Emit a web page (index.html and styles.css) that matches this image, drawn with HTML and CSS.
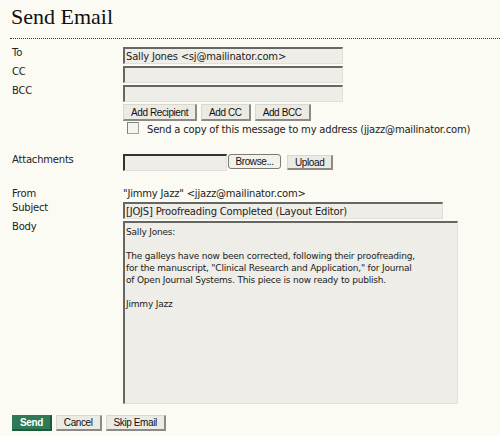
FILE: index.html
```html
<!DOCTYPE html>
<html>
<head>
<meta charset="utf-8">
<link rel="stylesheet" href="styles.css">
</head>
<body>
<div class="page">
  <h1 class="title">Send Email</h1>
  <div class="rule"></div>
  <form class="form">
    <div class="row">
      <div class="label">To</div>
      <div class="field"><input class="text w220" type="text" value="Sally Jones <sj@mailinator.com>"></div>
    </div>
    <div class="row">
      <div class="label">CC</div>
      <div class="field"><input class="text w220" type="text" value=""></div>
    </div>
    <div class="row">
      <div class="label">BCC</div>
      <div class="field"><input class="text w220" type="text" value=""></div>
    </div>
    <div class="row">
      <div class="label"></div>
      <div class="field buttons">
        <button type="button" class="btn">Add Recipient</button>
        <button type="button" class="btn">Add CC</button>
        <button type="button" class="btn">Add BCC</button>
      </div>
    </div>
    <div class="row check-row">
      <div class="label"></div>
      <div class="field check">
        <span class="box"></span>
        <span class="check-text">Send a copy of this message to my address (jjazz@mailinator.com)</span>
      </div>
    </div>
    <div class="row attach">
      <div class="label">Attachments</div>
      <div class="field buttons">
        <span class="file"></span>
        <button type="button" class="btn browse">Browse...</button>
        <button type="button" class="btn upload">Upload</button>
      </div>
    </div>
    <div class="row from">
      <div class="label">From</div>
      <div class="field plain">"Jimmy Jazz" &lt;jjazz@mailinator.com&gt;</div>
    </div>
    <div class="row">
      <div class="label">Subject</div>
      <div class="field"><input class="text w320" type="text" value="[JOJS] Proofreading Completed (Layout Editor)"></div>
    </div>
    <div class="row">
      <div class="label">Body</div>
      <div class="field top"><div class="area">Sally Jones:<br><br>The galleys have now been corrected, following their proofreading,<br>for the manuscript, "Clinical Research and Application," for Journal<br>of Open Journal Systems. This piece is now ready to publish.<br><br>Jimmy Jazz</div></div>
    </div>
    <div class="actions">
      <button type="button" class="btn send">Send</button>
      <button type="button" class="btn">Cancel</button>
      <button type="button" class="btn">Skip Email</button>
    </div>
  </form>
</div>
</body>
</html>
```
FILE: styles.css
```css
html, body {
  margin: 0;
  padding: 0;
  background: #fbfbf3;
}
body {
  font-family: "DejaVu Sans", Verdana, sans-serif;
  font-size: 10px;
  letter-spacing: -0.2px;
  color: #222;
}
.page {
  padding: 0 0 0 10px;
}
.title {
  margin: 6px 0 0 1px;
  font-family: "Liberation Serif", Georgia, serif;
  font-weight: normal;
  font-size: 22px;
  line-height: 22px;
  letter-spacing: 0;
  color: #111;
}
.rule {
  margin-top: 10px;
  border-top: 1px dotted #333;
}
.form {
  margin: 8px 0 0 2px;
}
.row {
  display: grid;
  grid-template-columns: 111px 1fr;
  margin-bottom: 2px;
}
.label {
  padding-top: 0;
  line-height: 12px;
}
.field {
  display: flex;
  align-items: center;
}
.field.top {
  align-items: flex-start;
}
.text {
  box-sizing: border-box;
  height: 17px;
  margin: 0;
  padding: 1px 1px 0;
  font-family: "DejaVu Sans", Verdana, sans-serif;
  font-size: 10px;
  letter-spacing: -0.2px;
  color: #222;
  background: #eeede7;
  border: 1px solid #e0dfd8;
  border-top: 2px solid #666664;
  border-left: 2px solid #666664;
  outline: none;
}
.w220 { width: 220px; }
.w320 { width: 320px; }
.buttons {
  gap: 4px;
}
.btn {
  box-sizing: border-box;
  height: 17px;
  margin: 0;
  padding: 0 7px;
  font-family: "Liberation Sans", Arial, sans-serif;
  font-size: 10px;
  letter-spacing: -0.4px;
  color: #111;
  background: #ecebe3;
  border: 1px solid #d8d7d0;
  border-right: 2px solid #8a8a86;
  border-bottom: 2px solid #8a8a86;
  border-radius: 0;
  line-height: 13px;
}
.check-row {
  margin-top: -1px;
}
.check {
  align-items: flex-start;
  height: 14px;
}
.box {
  display: inline-block;
  box-sizing: border-box;
  width: 12px;
  height: 12px;
  margin-left: 4px;
  background: #f3f3ef;
  border: 1px solid #a4a4a0;
  border-top-color: #808080;
  border-left-color: #808080;
}
.check-text {
  margin-left: 8px;
  padding-top: 2px;
  line-height: 12px;
}
.attach {
  margin-top: 18px;
}
.file {
  display: inline-block;
  box-sizing: border-box;
  width: 104px;
  height: 17px;
  background: #eeede7;
  border: 1px solid #e0dfd8;
  border-top: 2px solid #333;
  border-left: 2px solid #333;
  margin-right: -3px;
}
.browse {
  height: 15px;
  border: 1px solid #7a7a76;
  border-radius: 3px;
  background: #f2f1ec;
  width: 53px;
  padding: 0 4px;
  line-height: 12px;
  align-self: flex-start;
}
.upload {
  height: 15px;
  width: 46px;
  line-height: 11px;
  align-self: flex-start;
  margin-top: 1px;
  margin-left: 2px;
}
.from {
  margin-top: 17px;
}
.plain {
  height: 12px;
  line-height: 12px;
}
.area {
  box-sizing: border-box;
  width: 335px;
  height: 183px;
  padding: 3px 1px;
  font-size: 9px;
  letter-spacing: -0.2px;
  line-height: 12px;
  white-space: nowrap;
  background: #eeede7;
  border: 1px solid #e0dfd8;
  border-top: 2px solid #666664;
  border-left: 2px solid #666664;
}
.actions {
  display: flex;
  gap: 4px;
  margin-top: 11px;
}
.send {
  height: 16px;
  background: #2e7a55;
  color: #fff;
  font-weight: bold;
  border: 1px solid #2e7a55;
  border-right: 2px solid #1d5a3c;
  border-bottom: 2px solid #1d5a3c;
  line-height: 12px;
}
.actions .btn {
  height: 16px;
  line-height: 12px;
}
```
